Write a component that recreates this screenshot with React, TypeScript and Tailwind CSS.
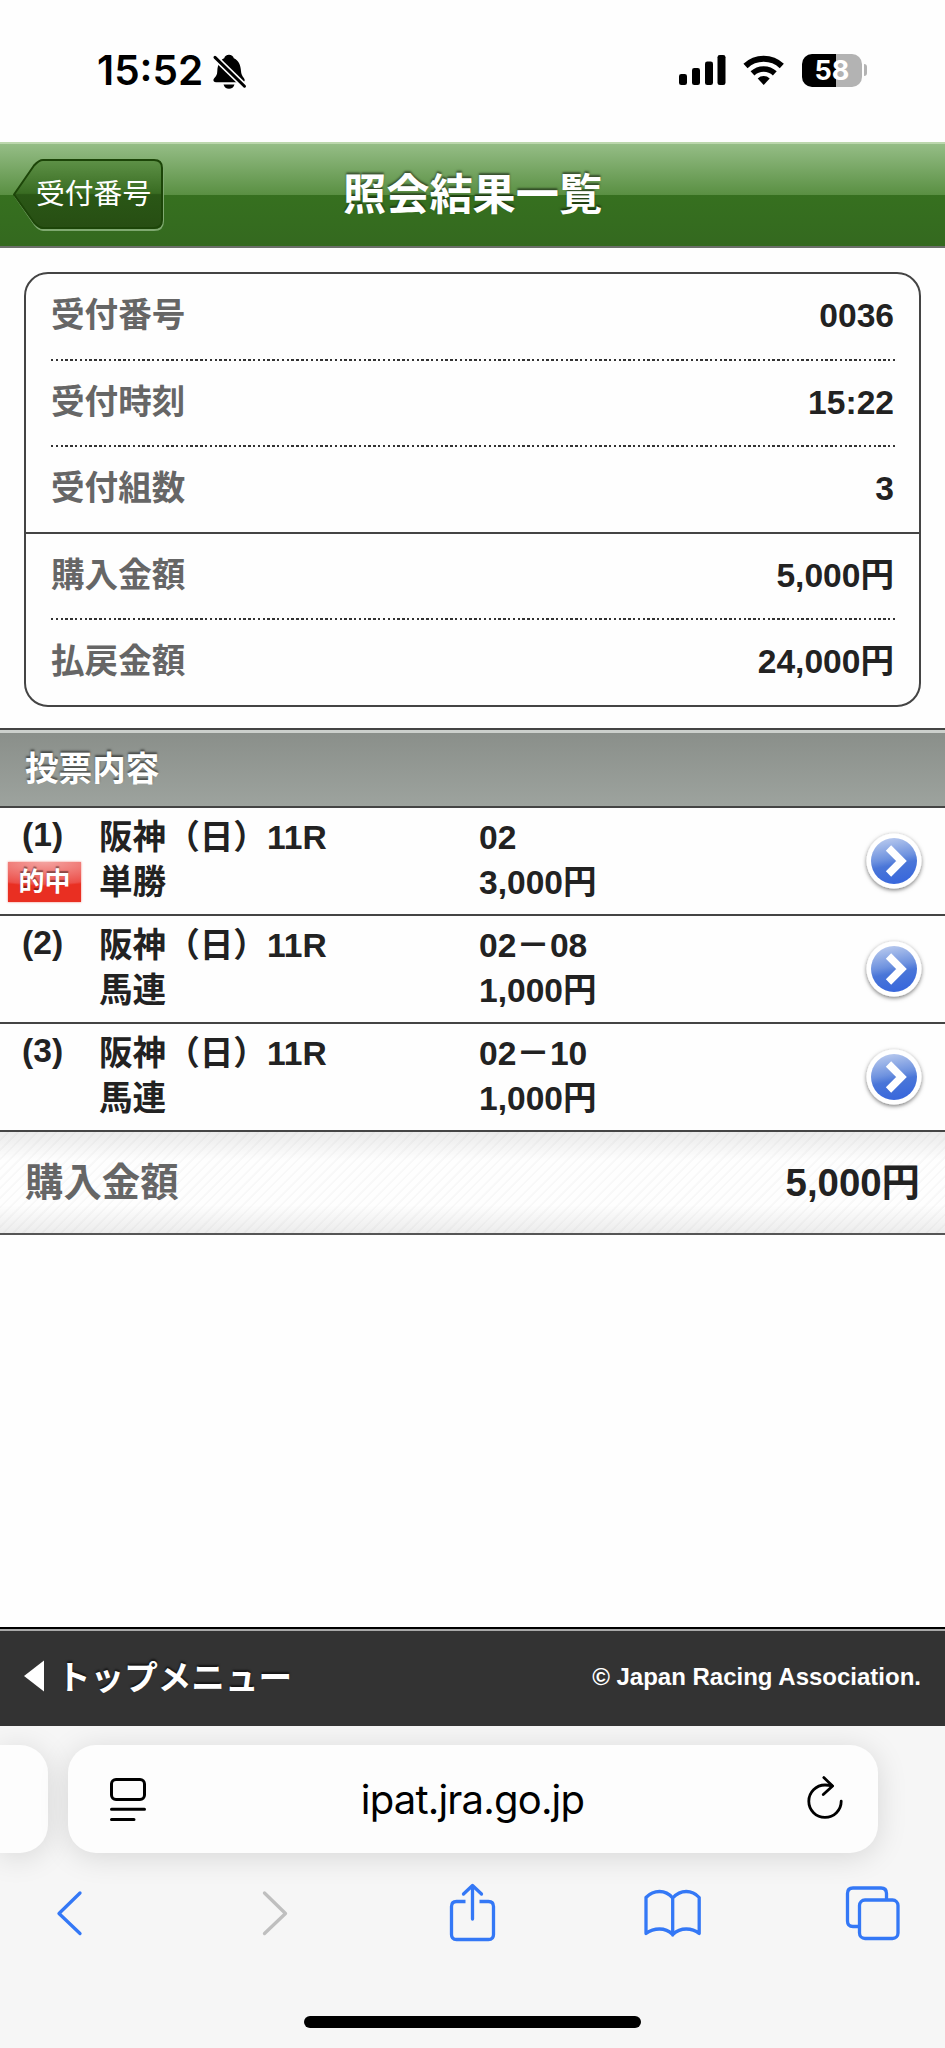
import type React from "react";

const jp = "font-['Liberation_Sans','Noto_Sans_CJK_JP',sans-serif]";

const summary = [
	{ label: "受付番号", value: "0036", line: "dotted" },
	{ label: "受付時刻", value: "15:22", line: "dotted" },
	{ label: "受付組数", value: "3", line: "solid" },
	{ label: "購入金額", value: "5,000円", line: "dotted" },
	{ label: "払戻金額", value: "24,000円", line: "none" },
];

const bets = [
	{ no: 1, race: "阪神（日）11R", type: "単勝", pick: "02", amount: "3,000円", hit: true },
	{ no: 2, race: "阪神（日）11R", type: "馬連", pick: "02－08", amount: "1,000円", hit: false },
	{ no: 3, race: "阪神（日）11R", type: "馬連", pick: "02－10", amount: "1,000円", hit: false },
];

const StatusBar = () => (
	<div className="h-[142px] pt-[51px] pl-[97px] pr-[78px] flex items-start justify-between font-['Inter',sans-serif] text-black">
		<div className="flex items-center h-10">
			<span className="text-[40.500px] leading-10 font-semibold w-[111px] whitespace-nowrap">
				15:52
			</span>
			<svg width="40" height="40" viewBox="208 50 40 40" className="block">
				<path d="M229 53.800c2.400 0 4.300 1.400 4.800 3.400 4.600 2 6.900 6.400 7.200 12.800.1 3 1.200 4.900 2.800 7.100 1.400 1.700 1.200 4.200-1.100 4.200h-26.800c-2.700 0-3.100-2.500-1.500-4.200 2-2.200 2.800-3.900 2.900-7.100.3-6.400 2.500-10.800 6.900-12.800.5-2 2.400-3.400 4.800-3.400z" />
				<path d="M223.500 83.400h11c-.7 2.800-2.800 4.400-5.500 4.400s-4.800-1.600-5.500-4.400z" />
				<path d="M212 53.500L248 88.500" stroke="#fefefe" strokeWidth="6.200" />
				<path d="M215 56.400L244.500 85.200" stroke="#000" strokeWidth="3" strokeLinecap="round" />
			</svg>
		</div>
		<div className="flex items-center h-10 -mt-[1px]">
			<svg width="48" height="32" viewBox="678 54 48 32" className="block mr-4">
				<rect x="678" y="74" width="8" height="11" rx="2.300" />
				<rect x="691" y="68" width="8" height="17" rx="2.300" />
				<rect x="704" y="61.500" width="8" height="23.500" rx="2.300" />
				<rect x="716.500" y="55" width="8" height="30" rx="2.300" />
			</svg>
			<svg width="42" height="32" viewBox="742 54 42 32" fill="none" stroke="#000" className="block mr-[17px]">
				<path d="M744.500 66a26.500 26.500 0 0 1 36.300 0" strokeWidth="6" />
				<path d="M751.500 73.400a16.300 16.300 0 0 1 22.300 0" strokeWidth="5.600" />
				<path d="M762.700 85l-6-6.500a8.600 8.600 0 0 1 12 0z" fill="#000" stroke="none" />
			</svg>
			<div className="w-[60px] h-[33px] rounded-[10px] bg-[linear-gradient(90deg,#000_57%,#b3b3b3_57%)] flex items-center justify-center">
				<span className="text-white text-[27px] leading-none font-bold">58</span>
			</div>
			<div className="w-[3px] h-3 ml-[2px] rounded-r-full bg-[#b3b3b3]" />
		</div>
	</div>
);

const Header = () => (
	<header className="h-[106px] border-t-2 border-t-[#bcd7ad] border-b-2 border-b-[#6c6f6a] bg-[linear-gradient(180deg,#95bd86_0%,#5a9043_49.500%,#36701f_50.500%,#34691f_100%)] grid grid-cols-[343px_1fr_343px] items-center">
		<a href="#back" className="relative block ml-3 w-[154px] h-[74px]">
			<svg width="154" height="74" viewBox="0 0 154 74" className="block">
				<defs>
					<linearGradient id="backFill" x1="0" y1="0" x2="0" y2="1">
						<stop offset="0" stopColor="#5e9147" />
						<stop offset="0.490" stopColor="#396c22" />
						<stop offset="0.510" stopColor="#2a5716" />
						<stop offset="1" stopColor="#274e13" />
					</linearGradient>
				</defs>
				<path d="M3 38L24 8q4-5 9-5h109q9 0 9 9v51q0 9-9 9H31q-4 0-8-5z" fill="none" stroke="#7fa970" strokeWidth="2" />
				<path d="M2 36.500L22 7.500q5-5.500 9-5.500h111q8 0 8 8v52q0 8-8 8H31q-4 0-9-5.500z" fill="url(#backFill)" stroke="#1c4508" strokeWidth="2" strokeLinejoin="round" />
			</svg>
			<span className="absolute inset-0 pl-[24px] text-white text-[28.800px] leading-[73px] font-normal whitespace-nowrap">
				受付番号
			</span>
		</a>
		<h1 className="text-center text-white text-[43.200px] leading-[60px] font-bold whitespace-nowrap -mt-[1px] [text-shadow:0_-2px_2px_rgba(0,0,0,0.5)]">
			照会結果一覧
		</h1>
	</header>
);

const SummaryCard = () => (
	<dl className="mt-6 mx-[24px] h-[434.500px] border-2 border-[#444] rounded-[24px] overflow-hidden font-bold text-[33.600px] leading-[50px]">
		{summary.map((row) => (
			<div key={row.label} className="h-[86.500px] flex flex-col">
				<div className="flex-1 flex items-center justify-between px-[25px]">
					<dt className="text-[#666]">{row.label}</dt>
					<dd className="text-[#222]">{row.value}</dd>
				</div>
				{row.line === "dotted" && (
					<div className="h-[2px] ml-[25px] mr-[24px] bg-[repeating-linear-gradient(90deg,#333_0,#333_2.400px,transparent_2.400px,transparent_4.810px)]" />
				)}
				{row.line === "solid" && <div className="h-[2px] bg-[#444]" />}
				{row.line === "none" && <div className="h-[2px]" />}
			</div>
		))}
	</dl>
);

const ArrowIcon = () => (
	<svg width="64" height="68" viewBox="-32 -34 64 68" className="block">
		<defs>
			<linearGradient id="ball" x1="0.300" y1="0" x2="0.500" y2="1">
				<stop offset="0" stopColor="#b9caee" />
				<stop offset="0.450" stopColor="#6e92df" />
				<stop offset="0.600" stopColor="#4a76d8" />
				<stop offset="1" stopColor="#3867dc" />
			</linearGradient>
			<filter id="ballShadow" x="-30%" y="-30%" width="160%" height="160%">
				<feDropShadow dx="0" dy="1.500" stdDeviation="2" floodColor="#000" floodOpacity="0.550" />
			</filter>
		</defs>
		<circle r="27.500" fill="#fff" filter="url(#ballShadow)" />
		<circle r="23" fill="url(#ball)" />
		<path d="M-5.500 -13L7.500 0L-5.500 13" fill="none" stroke="#fff" strokeWidth="7.500" />
	</svg>
);

const BetRow = ({ bet }: { bet: (typeof bets)[number] }) => (
	<li className="h-[108px] border-b-2 border-[#444] grid grid-cols-[99px_380px_1fr_83px] text-[#222] font-bold text-[33.600px] leading-[45.700px]">
		<div className="pt-[4px]">
			<div className="pl-[22px]">({bet.no})</div>
			{bet.hit && (
				<div className="ml-2 mt-[5px] w-[73px] h-[40px] bg-[radial-gradient(ellipse_120%_60%_at_50%_0%,#f4a3a0_0%,#ec4f49_92%,#e92f22_100%)] bg-[#e8291c] shadow-[0_0_2px_rgba(232,41,28,0.6)] text-white text-[26px] leading-[40px] text-center [text-shadow:0_-2px_1px_rgba(0,0,0,0.4)]">
					的中
				</div>
			)}
		</div>
		<div className="pt-[7px]">
			<div>{bet.race}</div>
			<div>{bet.type}</div>
		</div>
		<div className="pt-[7px]">
			<div>{bet.pick}</div>
			<div>{bet.amount}</div>
		</div>
		<div className="flex items-center">
			<ArrowIcon />
		</div>
	</li>
);

const TotalBar = () => (
	<div className="h-[103px] border-b-2 border-[#555] pt-[2px] px-[25px] flex items-center justify-between font-bold text-[38.400px] bg-[linear-gradient(180deg,rgba(0,0,0,0.080)_0%,rgba(0,0,0,0)_28%,rgba(0,0,0,0)_72%,rgba(0,0,0,0.070)_100%),repeating-linear-gradient(135deg,#fefefe_0,#fefefe_4.500px,#f8f8f8_5.500px,#f8f8f8_6.800px)]">
		<span className="text-[#666]">購入金額</span>
		<span className="text-[#222]">5,000円</span>
	</div>
);

const Footer = () => (
	<footer className="h-[99px] border-t-2 border-black bg-[#333]">
		<div className="h-[97px] border-t-2 border-[#aaa] px-6 flex items-center justify-between text-white font-bold">
			<a href="#top" className="flex items-center text-[33.600px] leading-[50px] [text-shadow:0_-2px_2px_rgba(0,0,0,0.6)]">
				<svg width="20" height="32" viewBox="0 0 20 32" className="block mr-[13px] mb-[5px]">
					<path d="M0 16L20 0.500v31z" fill="#fff" />
				</svg>
				トップメニュー
			</a>
			<small className="text-2xl leading-none pb-[4px]">© Japan Racing Association.</small>
		</div>
	</footer>
);

const ToolbarIcon = ({
	viewBox,
	width,
	height,
	color = "#3478f6",
	className = "",
	children,
}: {
	viewBox: string;
	width: number;
	height: number;
	color?: string;
	className?: string;
	children: React.ReactNode;
}) => (
	<svg
		width={width}
		height={height}
		viewBox={viewBox}
		fill="none"
		stroke={color}
		strokeWidth="3.300"
		strokeLinecap="round"
		strokeLinejoin="round"
		className={`block shrink-0 ${className}`}
	>
		{children}
	</svg>
);

const Browser = () => (
	<nav className="h-[322px] bg-[#f6f6f6] pt-[19px] overflow-hidden">
		<div className="flex gap-5 h-[108px]">
			<div className="w-[48px] rounded-r-[28px] bg-[#fdfdfd] shadow-[0_4px_30px_rgba(0,0,0,0.13)]" />
			<div className="w-[810px] rounded-[28px] bg-[#fdfdfd] shadow-[0_4px_30px_rgba(0,0,0,0.13)] flex items-center justify-between pl-[40px] pr-[32px]">
				<ToolbarIcon viewBox="108 1775 40 48" width={40} height={48} color="#000">
					<rect x="111.500" y="1779.500" width="33" height="20" rx="4.500" strokeWidth="3" />
					<path d="M111.500 1809.200h33M111.500 1819.500h22.500" strokeWidth="3" />
				</ToolbarIcon>
				<span className="font-['Inter',sans-serif] text-black text-[40px] leading-[50px] tracking-[-0.800px] pt-[2px] pr-[7px]">
					ipat.jra.go.jp
				</span>
				<ToolbarIcon viewBox="804 1775 42 48" width={42} height={48} color="#000">
					<path d="M841.200 1801.200A16.200 16.200 0 1 1 825 1785q3.500 0 7 .8" strokeWidth="2.800" />
					<path d="M823.800 1777.600l8.800 8.400-9.300 8.500" strokeWidth="2.800" />
				</ToolbarIcon>
			</div>
		</div>
		<div className="h-[122px] flex items-center pl-14">
			<ToolbarIcon viewBox="56 1883 28 62" width={28} height={62}>
				<path d="M80 1893l-21 20.500 21 20" />
			</ToolbarIcon>
			<ToolbarIcon viewBox="261 1883 28 62" width={28} height={62} color="#bfbfbf" className="ml-[177px]">
				<path d="M264.500 1893l21 20.500-21 20" />
			</ToolbarIcon>
			<ToolbarIcon viewBox="446 1883 52 62" width={52} height={62} className="ml-[157px]">
				<path d="M465.500 1901.500h-9q-5 0-5 5v28q0 5 5 5h32q5 0 5-5v-28q0-5-5-5h-9" strokeLinecap="butt" />
				<path d="M472.500 1919v-33M463.500 1894l9-8.500 9 8.500" />
			</ToolbarIcon>
			<ToolbarIcon viewBox="642 1883 62 62" width={62} height={62} className="ml-[144px]">
				<path d="M672.700 1935v-37q-5.500-6.500-13.200-6.500t-13.500 6v36q6-4.500 13.500-4.500t13.200 5.500q6-5.500 13.500-5.500t13 4.500v-36q-5.500-6-13-6t-13.500 6.500" />
			</ToolbarIcon>
			<ToolbarIcon viewBox="844 1883 58 62" width={58} height={62} className="ml-[140px]">
				<path d="M858.500 1926.500h-5.500q-5.500 0-5.500-5.500v-27.500q0-5.500 5.500-5.500h28q5.500 0 5.500 5.500v5.500" strokeLinecap="butt" />
				<rect x="859.500" y="1900" width="38.500" height="38.500" rx="5.500" />
			</ToolbarIcon>
		</div>
		<div className="w-[337px] h-3 mx-auto mt-[41px] rounded-full bg-black" />
	</nav>
);

const App = () => {
	return (
		<div className={`w-[945px] h-[2048px] overflow-hidden bg-[#fefefe] flex flex-col ${jp}`} lang="ja">
			<StatusBar />
			<Header />
			<main className="flex-1">
				<SummaryCard />
				<h2 className="mt-[21.500px] h-[79.500px] border-t-2 border-b-2 border-[#444] text-white font-bold text-[33.600px]">
					<div className="h-full border-t-[3px] border-[#ccd0cc] bg-[linear-gradient(180deg,#8a8f8a,#9da39e)] px-[25px] leading-[73px] [text-shadow:0_-2px_2px_rgba(0,0,0,0.5)]">
						投票内容
					</div>
				</h2>
				<ul>
					{bets.map((bet) => (
						<BetRow key={bet.no} bet={bet} />
					))}
				</ul>
				<TotalBar />
			</main>
			<Footer />
			<Browser />
		</div>
	);
};

export default App;
